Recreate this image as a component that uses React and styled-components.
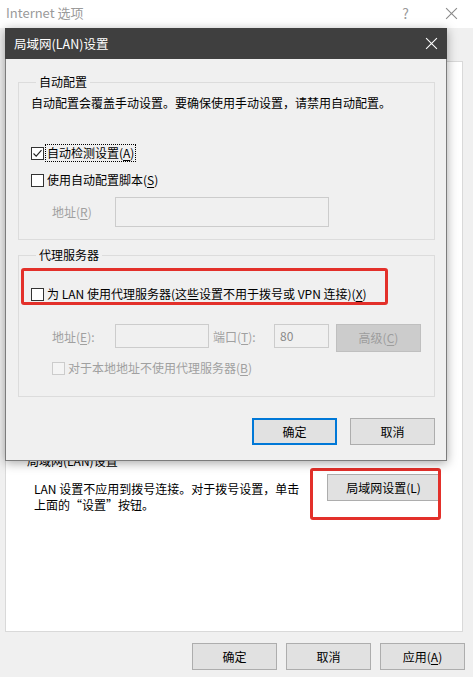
import React from 'react';
import styled, { createGlobalStyle } from 'styled-components';

const Global = createGlobalStyle`
  html, body {
    margin: 0;
    padding: 0;
    background: #f0f0f0;
  }
  * {
    box-sizing: border-box;
  }
`;

const Window = styled.div`
  position: relative;
  width: 473px;
  height: 677px;
  display: flex;
  flex-direction: column;
  background: #f0f0f0;
  font-family: "Noto Sans CJK SC", "Noto Sans", sans-serif;
  font-size: 12px;
  line-height: 16px;
  color: #000;
  overflow: hidden;
`;

const OuterTitle = styled.div`
  height: 28px;
  flex: none;
  display: flex;
  align-items: center;
  padding: 0 15px 2px 6px;
  background: #fff;
  color: #9a9a9a;
  font-size: 13px;
`;

const OuterTitleText = styled.span`
  flex: 1;
`;

const Help = styled.span`
  margin-right: 36px;
  font-size: 14px;
  color: #9a9a9a;
`;

const OuterBody = styled.div`
  flex: 1;
  display: flex;
  flex-direction: column;
  padding: 33px 0 0 5px;
`;

const TabPanel = styled.div`
  position: relative;
  width: 458px;
  height: 571px;
  flex: none;
  background: #fff;
  border: 1px solid #d9d9d9;
  padding: 391px 22px 0 21px;
`;

const SectionTitle = styled.div`
  height: 16px;
`;

const LanRow = styled.div`
  display: flex;
  justify-content: space-between;
  align-items: flex-start;
  margin-top: 5px;
`;

const LanText = styled.div`
  margin-top: 7px;
  padding-left: 7px;
  white-space: nowrap;
`;

const Footer = styled.div`
  display: flex;
  justify-content: flex-end;
  gap: 9px;
  padding: 11px 8px 7px 0;
`;

const Button = styled.button`
  width: ${p => p.w || 85}px;
  height: ${p => p.h || 27}px;
  padding: 0;
  margin: 0;
  font: inherit;
  font-size: 12px;
  color: ${p => (p.disabled ? '#9d9d9d' : '#000')};
  background: ${p => (p.disabled ? '#cccccc' : '#e1e1e1')};
  border: ${p => (p.primary ? '2px solid #0078d7' : p.disabled ? '1px solid #bfbfbf' : '1px solid #adadad')};
  flex: none;
`;

const Annotation = styled.div`
  position: absolute;
  left: ${p => p.x}px;
  top: ${p => p.y}px;
  width: ${p => p.w}px;
  height: ${p => p.h}px;
  border: 3px solid #e3302a;
  border-radius: 3px;
  pointer-events: none;
`;

const Dialog = styled.div`
  position: absolute;
  left: 5px;
  top: 28px;
  width: 442px;
  height: 433px;
  display: flex;
  flex-direction: column;
  background: #f0f0f0;
  border: 1px solid #7c7c7c;
  border-top: none;
  box-shadow: 0 2px 10px rgba(0, 0, 0, 0.35);
`;

const DialogTitle = styled.div`
  height: 31px;
  flex: none;
  display: flex;
  align-items: center;
  justify-content: space-between;
  padding: 0 9px 0 9px;
  margin: 0 -1px;
  background: #3f3f3f;
  color: #fff;
  font-size: 12.5px;
`;

const DialogBody = styled.div`
  flex: 1;
  display: flex;
  flex-direction: column;
  padding: 15px 11px 0 12px;
`;

const Group = styled.fieldset`
  margin: ${p => p.gap || 0}px 0 0 0;
  padding: 0 0 ${p => p.pb}px 12px;
  min-width: 0;
  border: 1px solid #dcdcdc;
`;

const Legend = styled.legend`
  margin-left: 5px;
  padding: 0 3px;
  line-height: 16px;
`;

const Text = styled.div`
  margin-top: ${p => p.mt || 0}px;
  color: ${p => (p.muted ? '#a0a0a0' : 'inherit')};
`;

const CheckRow = styled.div`
  display: flex;
  align-items: center;
  gap: 3px;
  height: 20px;
  margin-top: ${p => p.mt || 0}px;
  padding-left: ${p => p.indent || 0}px;
  color: ${p => (p.disabled ? '#a0a0a0' : '#000')};
`;

const Box = styled.span`
  width: 13px;
  height: 13px;
  flex: none;
  display: flex;
  align-items: center;
  justify-content: center;
  background: ${p => (p.disabled ? '#f4f4f4' : '#fff')};
  border: 1px solid ${p => (p.disabled ? '#cccccc' : '#333')};
`;

const Focused = styled.span`
  outline: 1px dotted #000;
  outline-offset: 0;
  padding: 0 1px;
  margin-left: -1px;
`;

const FieldRow = styled.div`
  display: flex;
  align-items: ${p => p.align || 'center'};
  margin-top: ${p => p.mt}px;
  padding-left: 21px;
`;

const FieldLabel = styled.span`
  width: ${p => p.w}px;
  margin-left: ${p => p.ml || 0}px;
  margin-top: ${p => p.mt || 0}px;
  flex: none;
  color: #a0a0a0;
`;

const Input = styled.div`
  width: ${p => p.w}px;
  height: ${p => p.h}px;
  flex: none;
  background: #f0f0f0;
  border: 1px solid #cccccc;
  color: #8a8a8a;
  padding: 3px 0 0 5px;
`;

const ButtonRow = styled.div`
  display: flex;
  justify-content: flex-end;
  gap: 13px;
  margin-top: 21px;
`;

const Key = styled.u`
  text-underline-offset: 2px;
`;

const Check = ({ checked, disabled }) => (
  <Box disabled={disabled}>
    {checked && (
      <svg width="11" height="11" viewBox="0 0 11 11">
        <path d="M1.5 5.5 L4.2 8.2 L9.5 2.2" fill="none" stroke="#222" strokeWidth="1.1" />
      </svg>
    )}
  </Box>
);

const CloseIcon = ({ color, size }) => (
  <svg width={size} height={size} viewBox="0 0 12 12">
    <path d="M1 1 L11 11 M11 1 L1 11" stroke={color} strokeWidth="1" fill="none" />
  </svg>
);

export default function App() {
  return (
    <Window>
      <Global />
      <OuterTitle>
        <OuterTitleText>Internet 选项</OuterTitleText>
        <Help>?</Help>
        <CloseIcon color="#8a8a8a" size={13} />
      </OuterTitle>

      <OuterBody>
        <TabPanel>
          <SectionTitle>局域网(LAN)设置</SectionTitle>
          <LanRow>
            <LanText>
              LAN 设置不应用到拨号连接。对于拨号设置，单击
              <br />
              上面的“设置”按钮。
            </LanText>
            <Button w={113}>局域网设置(L)</Button>
          </LanRow>
          <Annotation x={304} y={406} w={131} h={52} />
        </TabPanel>
        <Footer>
          <Button>确定</Button>
          <Button>取消</Button>
          <Button>
            应用(<Key>A</Key>)
          </Button>
        </Footer>
      </OuterBody>

      <Dialog>
        <DialogTitle>
          <span>局域网(LAN)设置</span>
          <CloseIcon color="#fff" size={13} />
        </DialogTitle>
        <DialogBody>
          <Group pb={12}>
            <Legend>自动配置</Legend>
            <Text mt={5}>自动配置会覆盖手动设置。要确保使用手动设置，请禁用自动配置。</Text>
            <CheckRow mt={32}>
              <Check checked />
              <Focused>
                自动检测设置(<Key>A</Key>)
              </Focused>
            </CheckRow>
            <CheckRow mt={7}>
              <Check />
              <span>
                使用自动配置脚本(<Key>S</Key>)
              </span>
            </CheckRow>
            <FieldRow mt={7}>
              <FieldLabel w={63}>
                地址(<Key>R</Key>)
              </FieldLabel>
              <Input w={214} h={30} />
            </FieldRow>
          </Group>

          <Group gap={7} pb={18}>
            <Legend>代理服务器</Legend>
            <CheckRow mt={21}>
              <Check />
              <span>
                为 LAN 使用代理服务器(这些设置不用于拨号或 VPN 连接)(<Key>X</Key>)
              </span>
            </CheckRow>
            <FieldRow mt={20} align="flex-start">
              <FieldLabel w={63} mt={5}>
                地址(<Key>E</Key>):
              </FieldLabel>
              <Input w={94} h={24} />
              <FieldLabel w={61} ml={4} mt={5}>
                端口(<Key>T</Key>):
              </FieldLabel>
              <Input w={55} h={24}>80</Input>
              <Button disabled w={85} h={28} style={{ marginLeft: 7 }}>
                高级(<Key>C</Key>)
              </Button>
            </FieldRow>
            <CheckRow mt={6} indent={21} disabled>
              <Check disabled />
              <span>
                对于本地地址不使用代理服务器(<Key>B</Key>)
              </span>
            </CheckRow>
          </Group>

          <ButtonRow>
            <Button primary>确定</Button>
            <Button>取消</Button>
          </ButtonRow>
        </DialogBody>
        <Annotation x={15} y={240} w={367} h={37} />
      </Dialog>
    </Window>
  );
}
